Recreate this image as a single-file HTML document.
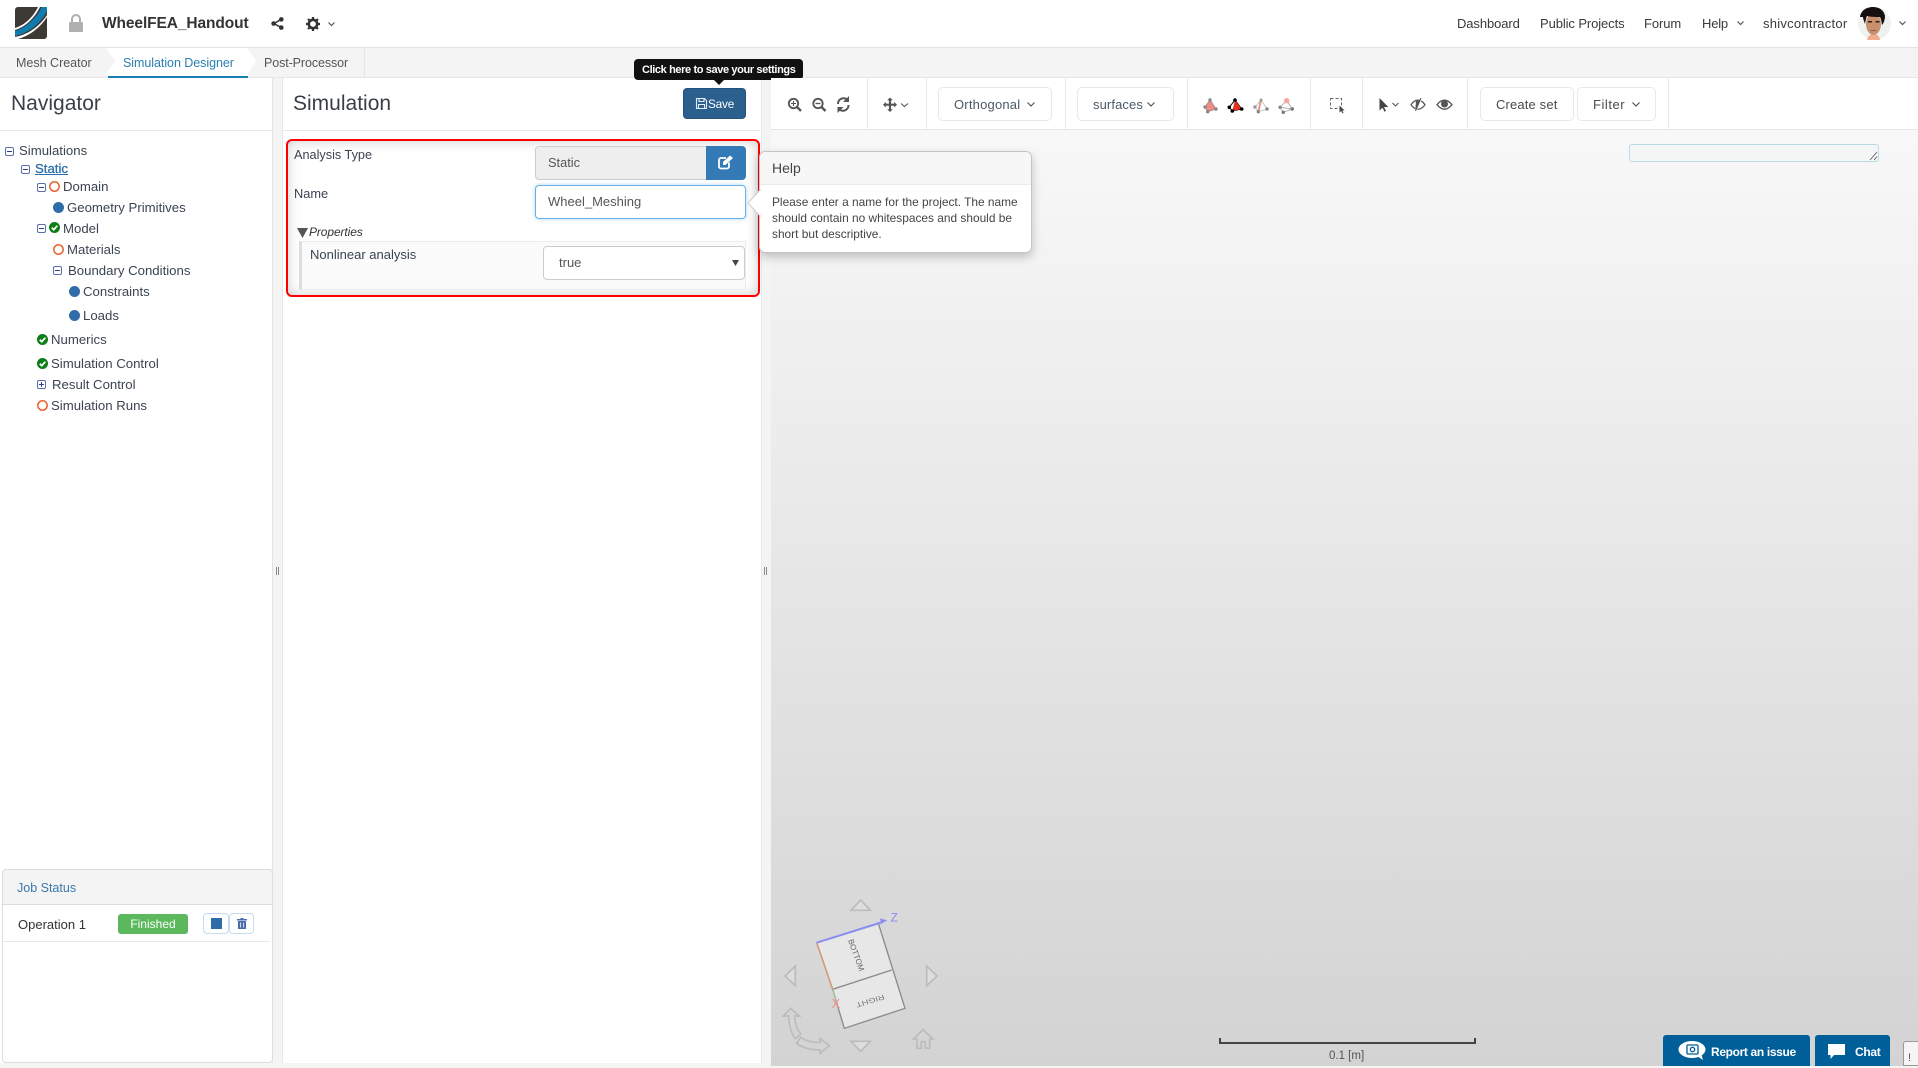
<!DOCTYPE html>
<html lang="en"><head><meta charset="utf-8"><title>WheelFEA_Handout</title>
<style>
html,body{margin:0;padding:0;width:1918px;height:1066px;overflow:hidden;background:#f4f4f4;font-family:"Liberation Sans",Arial,sans-serif;color:#333}
div,span,svg{position:absolute;box-sizing:border-box}
.t{white-space:nowrap;line-height:20px;height:20px;font-size:13px;color:#3a3a3a;margin-top:1px}
svg{overflow:visible}
.sep{width:1px;top:78px;height:52px;background:#e9e9e9}
.btn{border:1px solid #e8e8e8;border-radius:5px;background:#fff;top:87px;height:34px}
.chev{fill:none;stroke:#555;stroke-width:1.2}
.tree{font-size:13.2px;color:#3b4452}
</style></head><body>

<!-- viewer background -->
<div style="left:771px;top:130px;width:1147px;height:936px;background:linear-gradient(#f8f8f8,#d3d3d3)"></div>

<!-- header -->
<div style="left:0;top:0;width:1918px;height:48px;background:#fff;border-bottom:1px solid #e4e4e4"></div>
<svg style="left:15px;top:7px" width="32" height="32" viewBox="0 0 32 32">
<rect width="32" height="32" rx="3" fill="#3d3935"/>
<path d="M0 24C10 21 20 13 27 0H32V4C26 16 14 26 0 29Z" fill="#0f7cb0"/>
<path d="M0 21C10 18 18 10 23 0H25C19 12 10 20 0 23Z" fill="#fff"/>
<path d="M0 30C12 28 24 20 32 8V10C25 21 14 29 3 32H0Z" fill="#fff"/>
</svg>
<svg style="left:69px;top:14px" width="14" height="18" viewBox="0 0 14 18">
<path d="M3 8V5a4 4 0 0 1 8 0v3" fill="none" stroke="#b0b0b0" stroke-width="2"/><rect y="8" width="14" height="10" rx="1" fill="#b0b0b0"/></svg>
<div class="t" style="left:102px;top:13px;font-size:15.5px;font-weight:bold;color:#333;letter-spacing:-.1px">WheelFEA_Handout</div>
<svg style="left:271px;top:17px" width="13" height="13" viewBox="0 0 13 13"><path d="M10 2.5 3 6.5l7 4" fill="none" stroke="#333" stroke-width="1.5"/><circle cx="10.3" cy="2.4" r="2.3" fill="#333"/><circle cx="2.6" cy="6.5" r="2.3" fill="#333"/><circle cx="10.3" cy="10.6" r="2.3" fill="#333"/></svg>
<svg style="left:306px;top:17px" width="14" height="14" viewBox="0 0 14 14"><circle cx="7" cy="7" r="4.2" fill="none" stroke="#333" stroke-width="2.6"/><path d="M7 0v3M7 11v3M0 7h3M11 7h3M2 2l2 2M10 10l2 2M12 2l-2 2M4 10l-2 2" stroke="#333" stroke-width="2.2"/></svg>
<svg style="left:328px;top:22px" width="7" height="5"><path class="chev" d="M.5 .5 3.5 3.5 6.5 .5"/></svg>

<div class="t" style="left:1457px;top:13px;letter-spacing:-.1px">Dashboard</div>
<div class="t" style="left:1540px;top:13px;letter-spacing:-.1px">Public Projects</div>
<div class="t" style="left:1644px;top:13px;letter-spacing:-.1px">Forum</div>
<div class="t" style="left:1702px;top:13px;letter-spacing:-.2px">Help</div>
<svg style="left:1737px;top:21px" width="7" height="5"><path class="chev" d="M.5 .5 3.5 3.5 6.5 .5"/></svg>
<div class="t" style="left:1763px;top:13px;letter-spacing:.25px">shivcontractor</div>
<svg style="left:1858px;top:7px" width="33" height="33" viewBox="0 0 33 33">
<circle cx="16.5" cy="16.5" r="16.5" fill="#eef3f0"/>
<path d="M9 33c1-4 3-6 6.500-6s6 2 6.500 6z" fill="#f0ac8c"/>
<ellipse cx="15.500" cy="17" rx="7.500" ry="11" fill="#c9906f"/>
<path d="M2 10C3 3 9 0 15 0c6 0 11 3 12 9 0 3-1 7-3 9-.5-4-1-6-2-8-4 0-9 0-13-1-1 2-1.500 5-2 8-1-3-2-5-2-7z" fill="#141010"/>
<rect x="10" y="14" width="4" height="1.500" fill="#2e1c14"/><rect x="17.500" y="14" width="4" height="1.500" fill="#2e1c14"/>
<rect x="12.500" y="23" width="6" height="1" fill="#9a5d4c"/>
</svg>
<svg style="left:1899px;top:21px" width="7" height="5"><path class="chev" d="M.5 .5 3.5 3.5 6.5 .5"/></svg>

<!-- tab bar -->
<div style="left:0;top:48px;width:1918px;height:30px;background:#f4f4f4;border-bottom:1px solid #e6e6e6"></div>
<div style="left:108px;top:48px;width:140px;height:30px;background:#fff;border-bottom:2px solid #1a7db3"></div>
<svg style="left:106px;top:48px" width="12" height="27"><path d="M0 0 10 13 0 27" fill="#f4f4f4" stroke="#fff"/></svg>
<svg style="left:247px;top:48px" width="12" height="27"><path d="M0 0 9 13 0 27Z" fill="#fff"/></svg>
<div style="left:364px;top:48px;width:1px;height:30px;background:#e6e6e6"></div>
<div class="t" style="left:16px;top:52px;font-size:12.5px;color:#555;letter-spacing:0">Mesh Creator</div>
<div class="t" style="left:123px;top:52px;font-size:12.5px;color:#2b7fae;letter-spacing:-.05px">Simulation Designer</div>
<div class="t" style="left:264px;top:52px;font-size:12.5px;color:#555;letter-spacing:-.1px">Post-Processor</div>

<!-- navigator -->
<div style="left:0;top:78px;width:273px;height:985px;background:#fff;border-right:1px solid #e4e4e4"></div>
<div style="left:0;top:130px;width:273px;height:1px;background:#e9e9e9"></div>
<div class="t" style="left:11px;top:93px;font-size:21px;line-height:20px;color:#3a3f47">Navigator</div>

<!-- tree toggles -->
<svg style="left:0;top:130px" width="273" height="300" viewBox="0 130 273 300">
<defs><g id="m"><rect x=".5" y=".5" width="8" height="8" rx="1.5" fill="#fff" stroke="#5a6ea8"/><path d="M2 4.5h5" stroke="#333a7a"/></g>
<g id="ch"><circle cx="5.5" cy="5.5" r="5.5" fill="#0d7d16"/><path d="M2.8 5.7 4.8 7.7 8.300 3.700" fill="none" stroke="#fff" stroke-width="1.8"/></g></defs>
<use href="#m" x="5" y="147"/><use href="#m" x="21" y="165"/><use href="#m" x="37" y="183"/><use href="#m" x="37" y="224"/><use href="#m" x="53" y="266"/>
<rect x="37.5" y="380.5" width="8" height="8" rx="1.5" fill="#fff" stroke="#5a6ea8"/><path d="M39 384.5h5M41.5 382v5" stroke="#2f3a9a"/>
<circle cx="54.5" cy="186.5" r="4.7" fill="none" stroke="#e8622f" stroke-width="1.5"/>
<circle cx="58.5" cy="207.5" r="5.5" fill="#2f6ca8"/>
<use href="#ch" x="49" y="222"/>
<circle cx="58.5" cy="249.5" r="4.7" fill="none" stroke="#e8622f" stroke-width="1.5"/>
<circle cx="74.5" cy="291.5" r="5.5" fill="#2f6ca8"/>
<circle cx="74.5" cy="315.5" r="5.5" fill="#2f6ca8"/>
<use href="#ch" x="37" y="334"/><use href="#ch" x="37" y="358"/>
<circle cx="42.5" cy="405.5" r="4.7" fill="none" stroke="#e8622f" stroke-width="1.5"/>
</svg>
<div class="t tree" style="left:19px;top:140px">Simulations</div>
<div class="t tree" style="left:33px;top:158px;color:#2a6fa8;text-decoration:underline;padding-left:2px;-webkit-text-stroke:.3px #2a6fa8">Static</div>
<div class="t tree" style="left:63px;top:176px">Domain</div>
<div class="t tree" style="left:67px;top:197px">Geometry Primitives</div>
<div class="t tree" style="left:63px;top:218px">Model</div>
<div class="t tree" style="left:67px;top:239px">Materials</div>
<div class="t tree" style="left:68px;top:260px">Boundary Conditions</div>
<div class="t tree" style="left:83px;top:281px">Constraints</div>
<div class="t tree" style="left:83px;top:305px">Loads</div>
<div class="t tree" style="left:51px;top:329px">Numerics</div>
<div class="t tree" style="left:51px;top:353px">Simulation Control</div>
<div class="t tree" style="left:52px;top:374px">Result Control</div>
<div class="t tree" style="left:51px;top:395px">Simulation Runs</div>

<!-- job status -->
<div style="left:2px;top:869px;width:271px;height:194px;background:#fff;border:1px solid #ddd;border-radius:4px"></div>
<div style="left:2px;top:869px;width:271px;height:36px;background:#f4f4f4;border:1px solid #ddd;border-radius:4px 4px 0 0"></div>
<div class="t" style="left:17px;top:877px;font-size:12.5px;color:#3c78ad;letter-spacing:0">Job Status</div>
<div style="left:3px;top:941px;width:267px;height:1px;background:#e8e8e8"></div>
<div class="t" style="left:18px;top:914px;font-size:13px;color:#333">Operation 1</div>
<div style="left:118px;top:914px;width:70px;height:20px;background:#5cb85c;border-radius:3px;color:#fff;font-size:12px;line-height:21px;text-align:center">Finished</div>
<div style="left:203px;top:913px;width:26px;height:21px;border:1px solid #c6dcea;border-radius:4px;background:#fff"></div>
<div style="left:211px;top:918px;width:11px;height:11px;background:#2f6ca8"></div>
<div style="left:229px;top:913px;width:25px;height:21px;border:1px solid #c6dcea;border-radius:4px;background:#fff"></div>
<svg style="left:237px;top:918px" width="10" height="11" viewBox="0 0 10 11"><path d="M3.5 1V0h3v1H10v1.5H0V1z" fill="#4c6ea8"/><path d="M1 3h8v8H1z" fill="#4c6ea8"/><path d="M3.5 4.5V9.5M6.5 4.5V9.5" stroke="#d5d8ee"/></svg>

<!-- splitter marks -->
<div style="left:276px;top:567px;width:1px;height:8px;background:#8a8a8a;box-shadow:2px 0 #8a8a8a"></div>
<div style="left:764px;top:567px;width:1px;height:8px;background:#8a8a8a;box-shadow:2px 0 #8a8a8a"></div>

<!-- simulation panel -->
<div style="left:282px;top:78px;width:480px;height:985px;background:#fff;border-left:1px solid #e8e8e8;border-right:1px solid #e8e8e8"></div>
<div style="left:282px;top:130px;width:480px;height:1px;background:#e9e9e9"></div>
<div class="t" style="left:293px;top:93px;font-size:21px;color:#3a3f47">Simulation</div>
<div style="left:683px;top:88px;width:63px;height:31px;background:#2a5f8e;border:1px solid #24527c;border-radius:4px"></div>
<svg style="left:696px;top:98px" width="11" height="11" viewBox="0 0 11 11"><path d="M.5 .5h8l2 2v8H.5z M3 .5v3h5v-3 M2.5 10.5v-4h6v4" fill="none" stroke="#e6eef5" stroke-width="1.1"/></svg>
<div class="t" style="left:708px;top:93px;font-size:11.8px;color:#fff;letter-spacing:-.2px">Save</div>

<!-- tooltip -->
<div style="left:634px;top:59px;width:169px;height:21px;background:#111;border-radius:4px"></div>
<svg style="left:714px;top:80px" width="10" height="5"><path d="M0 0H10L5 5Z" fill="#111"/></svg>
<div class="t" style="left:642px;top:59px;font-size:11px;font-weight:bold;color:#fff;letter-spacing:-.38px;line-height:21px">Click here to save your settings</div>

<!-- red box -->
<div style="left:286px;top:139px;width:474px;height:158px;border:2px solid #f00;border-radius:6px;background:#fff;box-shadow:inset 0 0 12px rgba(90,90,90,.3)"></div>
<div class="t" style="left:294px;top:144px;font-size:12.7px;color:#3b4452">Analysis Type</div>
<div style="left:535px;top:146px;width:172px;height:34px;background:#eee;border:1px solid #ccc;border-radius:4px 0 0 4px"></div>
<div class="t" style="left:548px;top:152px;font-size:12.8px;color:#555">Static</div>
<div style="left:706px;top:146px;width:40px;height:34px;background:#337ab7;border-radius:0 4px 4px 0"></div>
<svg style="left:718px;top:155px" width="16" height="15" viewBox="0 0 16 15"><path d="M11 7.5v4a2 2 0 0 1-2 2H3a2 2 0 0 1-2-2V5a2 2 0 0 1 2-2h5" fill="none" stroke="#fff" stroke-width="1.8"/><path d="M5 10V7l7-6.500 3 2.500-7.500 7z" fill="#fff"/></svg>
<div class="t" style="left:294px;top:183px;font-size:12.8px;color:#3b4452">Name</div>
<div style="left:535px;top:185px;width:211px;height:34px;background:#fff;border:1px solid #66afe9;border-radius:4px;box-shadow:0 0 4px rgba(102,175,233,.5)"></div>
<div class="t" style="left:548px;top:191px;font-size:13px;color:#555">Wheel_Meshing</div>
<svg style="left:297px;top:228px" width="11" height="10"><path d="M0 0H11L5.500 10Z" fill="#555"/></svg>
<div class="t" style="left:309px;top:221px;font-size:12px;font-style:italic;color:#333;letter-spacing:-.1px">Properties</div>
<div style="left:299px;top:241px;width:447px;height:49px;background:#fbfbfb;border:1px solid #ececec;border-left:3px solid #ddd"></div>
<div class="t" style="left:310px;top:244px;font-size:13px;color:#3b4452">Nonlinear analysis</div>
<div style="left:543px;top:246px;width:202px;height:34px;background:#fff;border:1px solid #ccc;border-radius:4px"></div>
<div class="t" style="left:559px;top:252px;font-size:13px;color:#555">true</div>
<svg style="left:732px;top:260px" width="7" height="6"><path d="M0 0H7L3.500 6Z" fill="#444"/></svg>

<!-- toolbar -->
<div style="left:771px;top:78px;width:1147px;height:52px;background:#fff;border-bottom:1px solid #e6e6e6"></div>
<div class="sep" style="left:867px"></div><div class="sep" style="left:926px"></div><div class="sep" style="left:1065px"></div><div class="sep" style="left:1187px"></div><div class="sep" style="left:1310px"></div><div class="sep" style="left:1362px"></div><div class="sep" style="left:1467px"></div><div class="sep" style="left:1668px"></div>

<svg style="left:780px;top:90px" width="140" height="30" viewBox="0 0 140 30" fill="none" stroke="#555">
<circle cx="13.5" cy="13.5" r="4.7" stroke-width="1.8"/><path d="M17 17 21 21" stroke-width="2.4"/><path d="M11 13.5h5M13.500 11v5" stroke-width="1.1"/>
<circle cx="38" cy="13.5" r="4.7" stroke-width="1.8"/><path d="M41.500 17 45.500 21" stroke-width="2.4"/><path d="M35.500 13.5h5" stroke-width="1.3"/>
<path d="M58 14a5.5 5.500 0 0 1 9.500-4M68.500 15a5.500 5.500 0 0 1-9.500 4" stroke-width="2"/><path d="M69 6v6h-6zM57.500 23v-6h6z" fill="#555" stroke="none"/>
<path d="M110 9.500v10.500M105 14.700h10" stroke-width="2.200"/><path d="M110 7.500l2.800 2.800h-5.600zM110 22l2.800-2.800h-5.600zM103 14.700l2.800-2.800v5.600zM117 14.700l-2.800-2.800v5.600z" fill="#555" stroke="none"/>
<path d="M121 13.500l3.500 3 3.500-3" stroke-width="1.1"/>
</svg>

<div class="btn" style="left:938px;width:114px"></div>
<div class="t" style="left:954px;top:94px;font-size:13px;color:#4a5a68;letter-spacing:.2px">Orthogonal</div>
<svg style="left:1027px;top:102px" width="8" height="5"><path class="chev" d="M.5 .5 4 4 7.5 .5"/></svg>
<div class="btn" style="left:1077px;width:97px"></div>
<div class="t" style="left:1093px;top:94px;font-size:13px;color:#4a5a68;letter-spacing:.1px">surfaces</div>
<svg style="left:1147px;top:102px" width="8" height="5"><path class="chev" d="M.5 .5 4 4 7.5 .5"/></svg>

<svg style="left:1195px;top:90px" width="110" height="30" viewBox="0 0 110 30">
<path d="M15 10 10 17 12.700 21.700 21 19Z" fill="#f08c84" stroke="#a88"/><circle cx="15" cy="10" r="1.700" fill="#888"/><circle cx="21" cy="19" r="1.700" fill="#888"/><circle cx="10" cy="17" r="1.700" fill="#888"/><circle cx="12.700" cy="21.700" r="1.700" fill="#888"/>
<path d="M40 10 34.300 17.300 37.300 21 46.700 19Z" fill="#fff" stroke="#000"/><path d="M40 10 46.700 19 37.300 21Z" fill="#e8301c"/><circle cx="40" cy="10" r="1.800" fill="#000"/><circle cx="46.700" cy="19" r="1.800" fill="#000"/><circle cx="34.300" cy="17.300" r="1.800" fill="#000"/><circle cx="37.300" cy="21" r="1.800" fill="#000"/>
<path d="M66 10 72 19 63.300 21.700 60 17Z" fill="#fff" stroke="#c4c4c4"/><path d="M66 10 63.300 21.700" stroke="#f08c84" stroke-width="1.800"/><circle cx="66" cy="10" r="1.500" fill="#999"/><circle cx="72" cy="19" r="1.700" fill="#888"/><circle cx="60" cy="17" r="1.700" fill="#999"/><circle cx="63.300" cy="21.700" r="1.700" fill="#888"/>
<path d="M91.700 10.700 97.300 19 88.300 22.300 85 17.300ZM85 17.300 97.300 19" fill="#fff" stroke="#b0b0b0"/><circle cx="91.700" cy="10.700" r="2.700" fill="#f6a69e"/><circle cx="97.300" cy="19" r="1.700" fill="#777"/><circle cx="85" cy="17.300" r="1.700" fill="#888"/><circle cx="88.300" cy="22.300" r="1.700" fill="#777"/>
</svg>

<svg style="left:1320px;top:90px" width="140" height="30" viewBox="0 0 140 30">
<rect x="10.5" y="8.5" width="11" height="10" fill="none" stroke="#666" stroke-dasharray="3 2"/>
<path d="M19.5 15.500v7l1.700-1.500 1.300 2.500 1-.6-1.200-2.400h2.300z" fill="#444"/>
<path d="M59.500 8v12.500l3-2.800 2 4 1.500-.8-2-3.900h4.300z" fill="#444"/>
<path d="M72.500 13l3 3 3-3" fill="none" stroke="#555" stroke-width="1.1"/>
<path d="M91 14.700c2-3 4.500-4.500 7-4.500s5 1.500 7 4.500c-2 3-4.500 4.500-7 4.500s-5-1.500-7-4.500z" fill="none" stroke="#555" stroke-width="1.300"/><path d="M96 10.700l4 0-2.500 8-2-1z" fill="#555"/><path d="M102 8 96 21" stroke="#fff" stroke-width="1"/><path d="M101 8 95.500 21" stroke="#555" stroke-width="1"/>
<path d="M117 14.700c2.500-3 5-4.500 7.500-4.500s5 1.500 7.500 4.500c-2.500 3-5 4.500-7.500 4.500s-5-1.500-7.500-4.500z" fill="none" stroke="#555" stroke-width="1.300"/><circle cx="124.500" cy="14" r="3.500" fill="#555"/>
</svg>

<div class="btn" style="left:1480px;width:94px"></div>
<div class="t" style="left:1496px;top:94px;font-size:13px;color:#4a4a4a;letter-spacing:.15px">Create set</div>
<div class="btn" style="left:1577px;width:79px"></div>
<div class="t" style="left:1593px;top:94px;font-size:13px;color:#4a4a4a;letter-spacing:.55px">Filter</div>
<svg style="left:1632px;top:102px" width="8" height="5"><path class="chev" d="M.5 .5 4 4 7.5 .5"/></svg>

<!-- textarea -->
<div style="left:1629px;top:144px;width:250px;height:18px;border:1px solid #bcd9e8;border-radius:3px;background:#f4f5f5"></div>
<svg style="left:1869px;top:151px" width="9" height="10"><path d="M1 9 8 1M5 9 8 5.500" stroke="#555" stroke-width=".8"/></svg>

<!-- help popover -->
<div style="left:759px;top:151px;width:273px;height:102px;background:#fff;border:1px solid #c4c4c4;border-radius:6px;box-shadow:0 4px 10px rgba(0,0,0,.22)"></div>
<div style="left:760px;top:152px;width:271px;height:33px;background:#f7f7f7;border-bottom:1px solid #ebebeb;border-radius:6px 6px 0 0"></div>
<svg style="left:747px;top:190px" width="13" height="26"><path d="M13 0 1 13 13 26Z" fill="#fff" stroke="#ccc"/><path d="M13 1V25" stroke="#fff" stroke-width="2"/></svg>
<div class="t" style="left:772px;top:158px;font-size:14px;color:#444;margin-top:0">Help</div>
<div style="left:772px;top:194px;width:255px;font-size:11.9px;line-height:16px;color:#444;white-space:nowrap">Please enter a name for the project. The name<br>should contain no whitespaces and should be<br>short but descriptive.</div>

<!-- gizmo -->
<svg style="left:770px;top:880px" width="220" height="186" viewBox="0 0 660 558">
<g fill="#dedede" stroke="#bcbcbc" stroke-width="5">
<path d="M272 60 243 91H301Z"/><path d="M272 514 243 484H301Z"/><path d="M76 258 45 288 76 317Z"/><path d="M470 258 501 288 470 317Z"/>
<path d="M62 385 40 408H56C56 430 62 458 76 476L92 462C80 446 74 426 74 408H88Z" fill="none"/>
<path d="M178 497 150 476V488C126 488 106 482 92 472L80 490C98 504 124 510 150 510V520Z" fill="none"/>
<path d="M459 449 430 477H441V505H454V485H466V505H479V477H489Z" fill="none"/>
</g>
<path d="M140 188 325 130 405 385 223 445 188 328Z" fill="#e7e7e7"/>
<path d="M325 130 405 385 223 445 188 328 365 270" fill="none" stroke="#8a8a8a" stroke-width="4"/>
<path d="M188 328 200 372" stroke="#9ad08e" stroke-width="3"/>
<path d="M140 188 188 328" stroke="#d49a80" stroke-width="5"/>
<path d="M140 188 338 126" stroke="#8a8cf0" stroke-width="6"/><path d="M352 121 330 115 334 131Z" fill="#8a8cf0"/>
<text x="362" y="125" font-size="36" fill="#8a8cf0" font-family="Liberation Sans">Z</text>
<text x="185" y="384" font-size="38" fill="#f08a8a" font-family="Liberation Sans">X</text>
<text transform="translate(234,181) rotate(70)" font-size="24" fill="#666" font-family="Liberation Sans" textLength="100" lengthAdjust="spacingAndGlyphs">BOTTOM</text>
<text transform="translate(341,343) rotate(163)" font-size="21" fill="#777" font-family="Liberation Sans" textLength="88" lengthAdjust="spacingAndGlyphs">RIGHT</text>
</svg>

<!-- scale bar -->
<div style="left:1219px;top:1042px;width:257px;height:2px;background:#444"></div>
<div style="left:1219px;top:1038px;width:2px;height:6px;background:#444"></div>
<div style="left:1474px;top:1038px;width:2px;height:6px;background:#444"></div>
<div class="t" style="left:1329px;top:1045px;font-size:11.5px;color:#555">0.1 [m]</div>

<!-- bottom buttons -->
<div style="left:1663px;top:1035px;width:147px;height:31px;background:#005e99;border-radius:3px 3px 0 0"></div>
<svg style="left:1678px;top:1041px" width="28" height="19" viewBox="0 0 28 19"><ellipse cx="14" cy="8.5" rx="13.5" ry="8.5" fill="#fff"/><path d="M19 15 25 19 23 12Z" fill="#fff"/><rect x="9" y="4" width="11" height="9" rx="1" fill="none" stroke="#005e99" stroke-width="1.3"/><circle cx="14.5" cy="8.5" r="2.2" fill="none" stroke="#005e99" stroke-width="1.3"/></svg>
<div class="t" style="left:1711px;top:1041px;font-size:12px;font-weight:bold;color:#fff;letter-spacing:-.35px">Report an issue</div>
<div style="left:1815px;top:1035px;width:75px;height:31px;background:#005e99;border-radius:3px 3px 0 0"></div>
<svg style="left:1828px;top:1044px" width="17" height="16" viewBox="0 0 17 16"><path d="M0 0H17V11H6L2.500 15V11H0Z" fill="#fff"/></svg>
<div class="t" style="left:1855px;top:1041px;font-size:12px;font-weight:bold;color:#fff;letter-spacing:-.3px">Chat</div>
<div style="left:1903px;top:1041px;width:15px;height:25px;background:#f5f5f5;border:1px solid #999;border-right:none;border-radius:3px 0 0 0"></div>
<div class="t" style="left:1908px;top:1047px;font-size:11px;color:#555">!</div>
</body></html>
